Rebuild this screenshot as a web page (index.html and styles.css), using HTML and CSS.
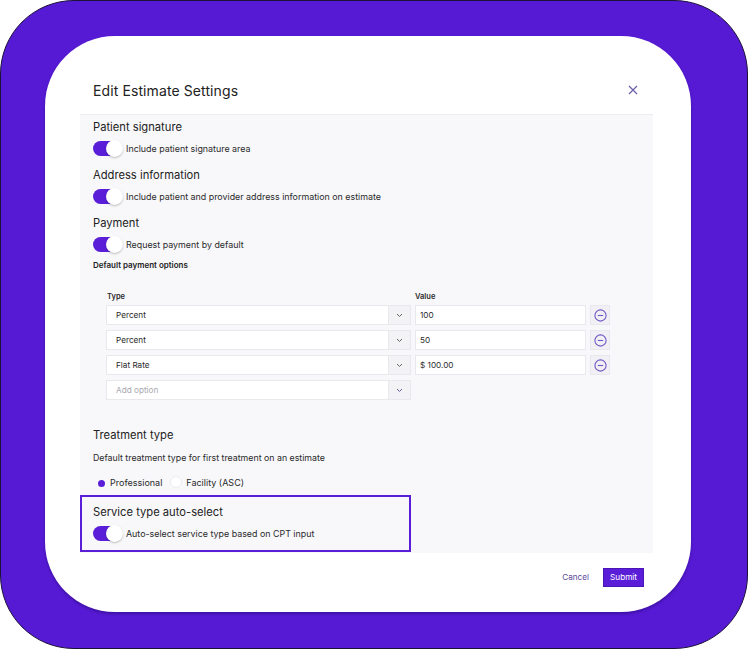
FILE: index.html
```html
<!DOCTYPE html>
<html>
<head>
<meta charset="utf-8">
<link rel="stylesheet" href="styles.css">
</head>
<body>
<div class="frame">
  <div class="card">
    <div class="header">
      <h1 class="title">Edit Estimate Settings</h1>
      <svg class="close" width="10" height="10" viewBox="0 0 10 10"><path d="M1 1L9 9M9 1L1 9" stroke="#6a5ca8" stroke-width="1.2" fill="none"/></svg>
    </div>
    <div class="content">
      <h2 class="heading h-first">Patient signature</h2>
      <div class="toggle-row"><span class="toggle"><span class="knob"></span></span><span class="label">Include patient signature area</span></div>

      <h2 class="heading">Address information</h2>
      <div class="toggle-row"><span class="toggle"><span class="knob"></span></span><span class="label">Include patient and provider address information on estimate</span></div>

      <h2 class="heading">Payment</h2>
      <div class="toggle-row"><span class="toggle"><span class="knob"></span></span><span class="label">Request payment by default</span></div>
      <div class="subhead">Default payment options</div>

      <div class="table">
        <div class="cols">
          <div class="col-type">Type</div>
          <div class="col-value">Value</div>
        </div>
        <div class="row">
          <div class="select"><span class="sel-text">Percent</span><span class="chev"><svg width="7" height="5" viewBox="0 0 7 5"><path d="M1 1L3.5 3.5L6 1" stroke="#666" stroke-width="1" fill="none"/></svg></span></div>
          <div class="input">100</div>
          <div class="minus"><svg width="13" height="13" viewBox="0 0 13 13"><circle cx="6.5" cy="6.5" r="5.6" stroke="#7357c6" stroke-width="1.1" fill="none"/><path d="M3.8 6.5H9.2" stroke="#7357c6" stroke-width="1.1"/></svg></div>
        </div>
        <div class="row">
          <div class="select"><span class="sel-text">Percent</span><span class="chev"><svg width="7" height="5" viewBox="0 0 7 5"><path d="M1 1L3.5 3.5L6 1" stroke="#666" stroke-width="1" fill="none"/></svg></span></div>
          <div class="input">50</div>
          <div class="minus"><svg width="13" height="13" viewBox="0 0 13 13"><circle cx="6.5" cy="6.5" r="5.6" stroke="#7357c6" stroke-width="1.1" fill="none"/><path d="M3.8 6.5H9.2" stroke="#7357c6" stroke-width="1.1"/></svg></div>
        </div>
        <div class="row">
          <div class="select"><span class="sel-text">Flat Rate</span><span class="chev"><svg width="7" height="5" viewBox="0 0 7 5"><path d="M1 1L3.5 3.5L6 1" stroke="#666" stroke-width="1" fill="none"/></svg></span></div>
          <div class="input">$ 100.00</div>
          <div class="minus"><svg width="13" height="13" viewBox="0 0 13 13"><circle cx="6.5" cy="6.5" r="5.6" stroke="#7357c6" stroke-width="1.1" fill="none"/><path d="M3.8 6.5H9.2" stroke="#7357c6" stroke-width="1.1"/></svg></div>
        </div>
        <div class="row">
          <div class="select"><span class="sel-text placeholder">Add option</span><span class="chev"><svg width="7" height="5" viewBox="0 0 7 5"><path d="M1 1L3.5 3.5L6 1" stroke="#6a5ca8" stroke-width="1" fill="none"/></svg></span></div>
        </div>
      </div>

      <h2 class="heading h-treat">Treatment type</h2>
      <div class="desc">Default treatment type for first treatment on an estimate</div>
      <div class="radios">
        <span class="radio on"></span><span class="rlabel">Professional</span>
        <span class="radio"></span><span class="rlabel">Facility (ASC)</span>
      </div>

      <div class="highlight">
        <h2 class="heading h-box">Service type auto-select</h2>
        <div class="toggle-row"><span class="toggle"><span class="knob"></span></span><span class="label">Auto-select service type based on CPT input</span></div>
      </div>
    </div>
    <div class="footer">
      <span class="cancel">Cancel</span>
      <span class="submit">Submit</span>
    </div>
  </div>
</div>
</body>
</html>
```

FILE: styles.css
```css
* { box-sizing: border-box; }
html, body { margin: 0; padding: 0; background: #fff; }
body { font-family: Inter, "Noto Sans", sans-serif; color: #222; }

.frame {
  width: 748px;
  height: 649px;
  border-radius: 74px;
  border: 1px solid #1c1238;
  background: #561ad4;
  padding: 35px 0 0 44px;
}

.card {
  width: 646px;
  height: 576px;
  background: #fff;
  border-radius: 70px;
  padding: 0 38px 0 35px;
  display: flex;
  flex-direction: column;
  box-shadow: 0 2px 3px rgba(20, 0, 80, 0.35);
}

.header {
  height: 79px;
  padding: 30px 15px 0 13px;
  display: flex;
  align-items: center;
  justify-content: space-between;
  border-bottom: 1px solid #ececf1;
}
.title {
  margin: 0;
  font-size: 14px;
  font-weight: 400;
  color: #222;
  letter-spacing: 0.1px;
}
.close { display: block; }

.content {
  height: 438px;
  background: #f8f8fa;
  padding: 0 13px;
  display: flex;
  flex-direction: column;
}

.heading {
  margin: 0;
  font-size: 11.2px;
  font-weight: 400;
  line-height: 16px;
  height: 16px;
  color: #222;
  margin-top: 10px;
}
.h-first { margin-top: 4px; }

.toggle-row {
  margin-top: 4px;
  height: 18px;
  display: flex;
  align-items: center;
}
.toggle {
  position: relative;
  width: 29px;
  height: 15px;
  border-radius: 8px;
  background: #5a1ed8;
  flex: none;
}
.knob {
  position: absolute;
  right: -1px;
  top: -1px;
  width: 17px;
  height: 17px;
  border-radius: 50%;
  background: #fff;
  box-shadow: 0 1px 2px rgba(0,0,0,0.25);
}
.label {
  margin-left: 4px;
  font-size: 8.9px;
  color: #2a2a2a;
}

.subhead {
  margin-top: 6px;
  font-size: 8px;
  font-weight: 600;
  line-height: 12px;
  color: #222;
}

.table {
  margin-top: 20px;
  padding-left: 13px;
  display: flex;
  flex-direction: column;
  gap: 5px;
}
.cols {
  display: flex;
  height: 12px;
  line-height: 12px;
  font-size: 7.5px;
  font-weight: 600;
  color: #2a2a2a;
  margin-bottom: -3px;
}
.col-type { width: 309px; padding-left: 1px; }

.row {
  display: flex;
  height: 20px;
  gap: 4px;
}
.select {
  width: 305px;
  height: 20px;
  background: #fff;
  border: 1px solid #e8e8ed;
  display: flex;
  align-items: center;
}
.sel-text {
  flex: 1;
  padding-left: 9px;
  font-size: 8.2px;
  color: #2a2a2a;
}
.placeholder { color: #a8a8b0; }
.chev {
  width: 22px;
  height: 100%;
  background: #f3f3f6;
  border-left: 1px solid #e8e8ed;
  display: flex;
  align-items: center;
  justify-content: center;
}
.input {
  width: 171px;
  height: 20px;
  background: #fff;
  border: 1px solid #e8e8ed;
  font-size: 8.2px;
  line-height: 18px;
  padding-left: 4px;
  color: #2a2a2a;
}
.minus {
  width: 20px;
  height: 20px;
  background: #f1f0f5;
  border: 1px solid #e8e8ee;
  display: flex;
  align-items: center;
  justify-content: center;
}

.h-treat { margin-top: 27px; }
.desc {
  margin-top: 9px;
  font-size: 8.8px;
  line-height: 12px;
  color: #2a2a2a;
}
.radios {
  margin-top: 12px;
  height: 12px;
  display: flex;
  align-items: center;
  padding-left: 1px;
}
.radio {
  width: 12px;
  height: 12px;
  border-radius: 50%;
  background: #fff;
  border: 1px solid #ededf1;
  position: relative;
  flex: none;
}
.radio.on { border-color: transparent; background: transparent; }
.radio.on::after {
  content: "";
  position: absolute;
  left: 2.5px;
  top: 2.5px;
  width: 7px;
  height: 7px;
  border-radius: 50%;
  background: #5a1ed8;
}
.rlabel {
  margin-left: 4px;
  margin-right: 8px;
  font-size: 9px;
  color: #2a2a2a;
}

.highlight {
  margin-top: 7px;
  margin-left: -13px;
  width: 331px;
  height: 57px;
  border: 2px solid #5a1ed8;
  padding-left: 11px;
}
.h-box { margin-top: 7px; }

.footer {
  flex: 1;
  display: flex;
  justify-content: flex-end;
  align-items: flex-start;
  padding: 15px 9px 0 0;
  gap: 14px;
}
.cancel {
  font-size: 8.2px;
  color: #5b4a9c;
  line-height: 19px;
}
.submit {
  height: 19px;
  line-height: 17px;
  padding: 0 6px;
  background: #5a1ed8;
  color: #fff;
  font-size: 8.2px;
  border: 1px solid #4a16b8;
}
```
